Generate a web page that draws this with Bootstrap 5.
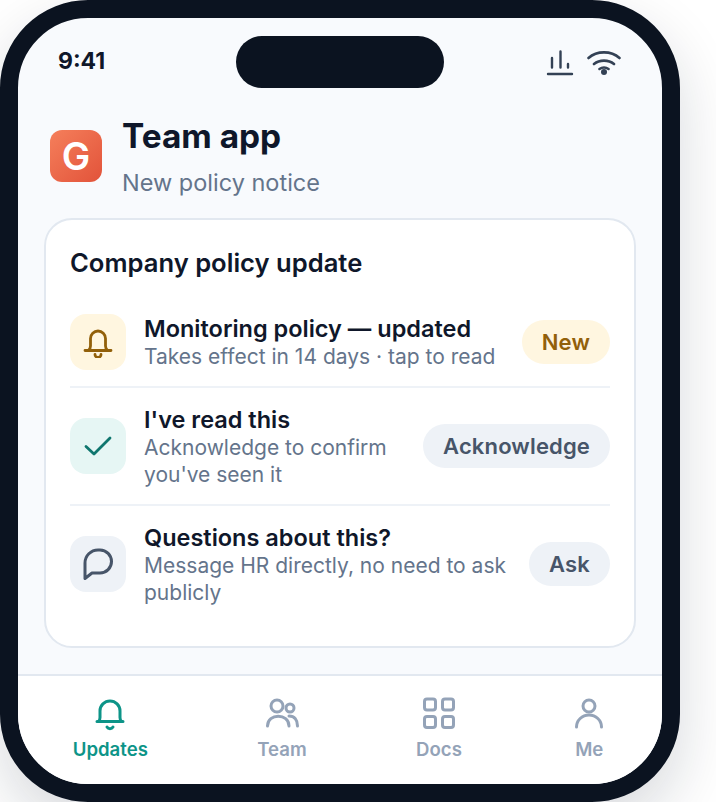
<!DOCTYPE html>
<html lang="en">
<head>
    <meta charset="UTF-8">
    <title>Team app</title>
    <link href="https://cdn.jsdelivr.net/npm/bootstrap@5.3.2/dist/css/bootstrap.min.css" rel="stylesheet">
    <style>
        html, body { height: 100%; }
        body { background: #fff; font-family: "Inter", "Liberation Sans", sans-serif; overflow: hidden; }
        .phone { width: 680px; height: 802px; border: 18px solid #0b1320; border-radius: 88px; background: #f8fafd; box-shadow: 0 24px 60px rgba(15, 23, 42, .16); }
        .status-row { display: grid; grid-template-columns: 1fr 208px 1fr; height: 52px; margin-top: 18px; padding: 0 40px; flex: none; }
        .clock { font-size: 23px; font-weight: 700; color: #0f172a; line-height: 50px; }
        .island { background: #0b1320; border-radius: 26px; }
        .status-icons { gap: 13px; color: #334155; padding-top: 13px; margin-right: 1px; }
        .app-head { margin: 26px 0 20px; padding: 0 32px; gap: 20px; flex: none; }
        .logo-box { width: 52px; height: 52px; border-radius: 12px; background: linear-gradient(135deg, #f57f5b, #e2533a); color: #fff; font-size: 38px; font-weight: 600; line-height: 52px; text-align: center; flex: none; }
        .app-title { font-size: 33.4px; font-weight: 700; line-height: 44px; color: #0f172a; margin: 0; }
        .app-sub { font-size: 23.5px; line-height: 30px; color: #64748b; margin-top: 10px; }
        .policy-card { margin: 0 26px; padding: 24px; border: 2px solid #e2e8f0; border-radius: 28px; background: #fff; flex: none; }
        .policy-title { font-size: 25.6px; font-weight: 600; line-height: 38px; color: #0f172a; margin: 0 0 15px; }
        .policy-row { padding: 16px 0; gap: 18px; border-bottom: 2px solid #eef2f7; }
        .policy-row:last-child { border-bottom: 0; }
        .tile { width: 56px; height: 56px; border-radius: 16px; flex: none; }
        .tile-amber { background: #fff6e0; color: #92600a; }
        .tile-teal { background: #e6f6f4; color: #0f766e; }
        .tile-slate { background: #eef2f7; color: #475569; }
        .row-title { font-size: 23.5px; font-weight: 600; line-height: 32px; color: #0f172a; margin-bottom: -2px; }
        .row-sub { font-size: 21px; line-height: 27px; color: #64748b; }
        .pill { height: 44px; padding: 0 20px; border-radius: 22px; font-size: 22px; font-weight: 600; line-height: 44px; letter-spacing: .15px; flex: none; }
        .pill-amber { background: #fff6e0; color: #92600a; }
        .pill-slate { background: #eef2f7; color: #475569; }
        .tabbar { margin-top: auto; height: 110px; border-top: 2px solid #e2e8f0; border-radius: 0 0 70px 70px; background: #fff; flex: none; color: #94a3b8; padding-top: 20px; }
        .tab-item { font-size: 18.6px; font-weight: 600; line-height: 28px; }
        .tab-on { color: #0d9488; }
        .tab-ico { width: 36px; height: 36px; display: block; margin-bottom: 3px; }
        svg { fill: none; stroke: currentColor; stroke-linecap: round; stroke-linejoin: round; display: block; }
    </style>
</head>
<body>

<div class="phone d-flex flex-column">
    <div class="status-row">
        <div class="clock">9:41</div>
        <div class="island"></div>
        <div class="status-icons d-flex justify-content-end align-items-start">
            <svg width="28" height="28" viewBox="0 0 28 28" stroke-width="2.4"><path d="M2 25h24M6 18.500V9M14.500 18.500V2.500M22 18.500V15"/></svg>
            <svg width="34" height="28" viewBox="0 0 34 28" stroke-width="2.6"><path d="M1.500 9C10 1.500 24 1.500 32.500 9M7 15c5.500-4.500 14.500-4.500 20 0M12.500 20c2.500-1.800 6.500-1.800 9 0"/><circle cx="17" cy="23" r="3" fill="currentColor" stroke="none"/></svg>
        </div>
    </div>

    <div class="app-head d-flex align-items-center">
        <div class="logo-box">G</div>
        <div>
            <h1 class="app-title">Team app</h1>
            <div class="app-sub">New policy notice</div>
        </div>
    </div>

    <div class="policy-card">
        <h2 class="policy-title">Company policy update</h2>

        <div class="policy-row d-flex align-items-center">
            <div class="tile tile-amber d-flex align-items-center justify-content-center">
                <svg width="30" height="32" viewBox="0 0 30 32" stroke-width="2.800"><path d="M2 24.500h26M5.500 24.500c1.200-1.200 2-2.500 2-4.500v-7.500a7.500 7.500 0 0 1 15 0V20c0 2 .8 3.300 2 4.500M12 28.500a3 3 0 0 0 6 0"/></svg>
            </div>
            <div class="flex-grow-1">
                <div class="row-title">Monitoring policy — updated</div>
                <div class="row-sub">Takes effect in 14 days · tap to read</div>
            </div>
            <div class="pill pill-amber">New</div>
        </div>

        <div class="policy-row d-flex align-items-center">
            <div class="tile tile-teal d-flex align-items-center justify-content-center">
                <svg width="30" height="30" viewBox="0 0 30 30" stroke-width="2.800"><path d="M3 15.500l8 7.500L27 7"/></svg>
            </div>
            <div class="flex-grow-1">
                <div class="row-title">I've read this</div>
                <div class="row-sub">Acknowledge to confirm you've seen it</div>
            </div>
            <div class="pill pill-slate">Acknowledge</div>
        </div>

        <div class="policy-row d-flex align-items-center">
            <div class="tile tile-slate d-flex align-items-center justify-content-center">
                <svg width="32" height="34" viewBox="0 0 32 34" stroke-width="3"><path d="M3 31.500V16A13 13 0 0 1 16 3h2a11.500 11.500 0 0 1 0 23H10z"/></svg>
            </div>
            <div class="flex-grow-1">
                <div class="row-title">Questions about this?</div>
                <div class="row-sub">Message HR directly, no need to ask publicly</div>
            </div>
            <div class="pill pill-slate">Ask</div>
        </div>
    </div>

    <div class="tabbar d-flex justify-content-around align-items-start">
        <div class="tab-item tab-on d-flex flex-column align-items-center">
            <svg class="tab-ico" viewBox="0 0 36 36" stroke-width="3"><path d="M5 25.500h26M6.500 25.500c1-1 1.500-2 1.500-4V15a10 10 0 0 1 20 0v6.500c0 2 .5 3 1.500 4M15 31a3.500 3.500 0 0 0 6 0"/></svg>
            <span>Updates</span>
        </div>
        <div class="tab-item d-flex flex-column align-items-center">
            <svg class="tab-ico" viewBox="0 0 36 36" stroke-width="3"><circle cx="13" cy="10" r="6"/><circle cx="26" cy="12" r="4"/><path d="M3.500 30c0-13 21.500-13 21.500 0M25 20c5.500 0 8.500 4 8.500 10"/></svg>
            <span>Team</span>
        </div>
        <div class="tab-item d-flex flex-column align-items-center">
            <svg class="tab-ico" viewBox="0 0 36 36" stroke-width="3"><rect x="3.500" y="3" width="11" height="11" rx="2.500"/><rect x="21.500" y="3" width="11" height="11" rx="2.500"/><rect x="3.500" y="20.500" width="11" height="11" rx="2.500"/><rect x="21.500" y="20.500" width="11" height="11" rx="2.500"/></svg>
            <span>Docs</span>
        </div>
        <div class="tab-item d-flex flex-column align-items-center">
            <svg class="tab-ico" viewBox="0 0 36 36" stroke-width="3"><circle cx="18" cy="10" r="6"/><path d="M5.500 31a12.500 12 0 0 1 25 0"/></svg>
            <span>Me</span>
        </div>
    </div>
</div>

</body>
</html>
